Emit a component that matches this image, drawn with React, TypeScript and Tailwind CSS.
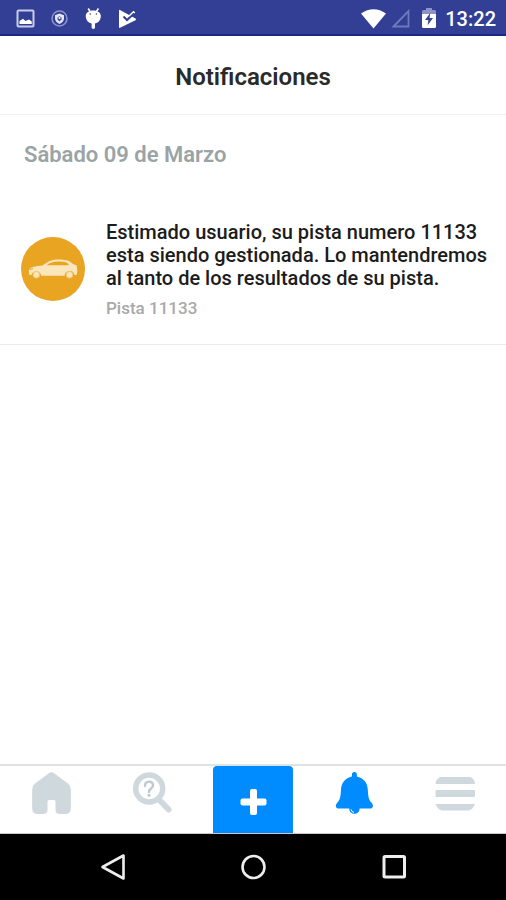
const HomeIcon = () => (
  <svg viewBox="0 0 40 44" className="h-11 w-10" fill="#cfd8dc" aria-hidden="true">
    <path d="M18.2 1Q20.5 -.6 22.8 1L37 11.6Q39.8 13.9 39.8 17.4V36.4Q39.8 42 34 42H29Q24.5 42 24.5 38V29.5Q24.5 28 23 28H18Q16.5 28 16.5 29.5V38Q16.5 42 12 42H7Q1.2 42 1.2 36.4V17.4Q1.2 13.9 4 11.6Z" />
  </svg>
);

const SearchIcon = () => (
  <svg viewBox="0 0 40 44" className="h-11 w-10" fill="none" aria-hidden="true">
    <circle cx="17.2" cy="16.5" r="13.5" stroke="#cfd8dc" strokeWidth="5.5" />
    <path d="M26.5 27L36.5 37.5" stroke="#cfd8dc" strokeWidth="6" strokeLinecap="round" />
    <path
      d="M13 13.7C13 8.3 21.1 8.3 21.1 13.3C21.1 16.7 17 16.3 17 19.9"
      stroke="#bccacf"
      strokeWidth="2.4"
      strokeLinecap="round"
    />
    <circle cx="17" cy="23.3" r="1.5" fill="#bccacf" />
  </svg>
);

const BellIcon = () => (
  <svg viewBox="0 0 40 44" className="h-11 w-10" fill="#008cff" aria-hidden="true">
    <path d="M17.9 2.6Q17.9 0 20.4 0T22.9 2.6V4.4C29.5 5.8 33.4 10.5 33.8 17.5C34.1 24.5 34.8 28 37.6 30.8C39.8 33.2 39.4 36.6 36 36.6H25.6C25.6 43.6 15.2 43.6 15.2 36.6H4.8C1.4 36.6 1 33.2 3.2 30.8C6 28 6.7 24.5 7 17.5C7.4 10.5 11.3 5.8 17.9 4.4Z" />
    <path d="M17 37.4Q17.4 40 20 40.4" fill="none" stroke="#fff" strokeWidth="1" />
  </svg>
);

const MenuIcon = () => (
  <svg viewBox="0 0 40 44" className="h-11 w-10" fill="#cfd8dc" aria-hidden="true">
    <path d="M5.5 5H35Q39.5 6.5 40 12H.5Q1 6.5 5.5 5Z" />
    <rect x=".5" y="18" width="39.5" height="7" rx="1" />
    <path d="M.5 32H40Q38 37.5 33.5 38.5H7Q2.5 37.5 .5 32Z" />
  </svg>
);

const CarIcon = () => (
  <svg viewBox="0 0 50 20" className="h-5 w-[50px]" aria-hidden="true">
    <path
      d="M1 15.5L.8 11C1.5 8.5 7 7 14.5 6.6C18.5 3.6 22 1.2 26 .8C32 .3 38 .9 41 2L45.5 5.2L48.6 6.2L49.4 12.5L48.4 16H46.5A5 5 0 0 0 36.6 16.8H13.2A5 5 0 0 0 3.4 16.2Z"
      fill="#fbe5bb"
    />
    <path d="M18.5 6.3C22 3.6 25.5 2.5 30 2.5C35 2.4 38.5 2.9 41 5.2L40 6.2Z" fill="#e9a422" />
    <path d="M1.5 10.5L5 9.6" stroke="#e9a422" strokeWidth="1" />
    <circle cx="8.3" cy="15.8" r="3.3" fill="#fbe5bb" stroke="#f2c67a" />
    <circle cx="41.5" cy="15.8" r="3.3" fill="#fbe5bb" stroke="#f2c67a" />
  </svg>
);

const StatusBar = () => (
  <div className="flex h-9 items-center justify-between border-b-2 border-[#1c2686] bg-[#323f94] pt-1 pr-[10px] pl-4 text-white">
    <div className="flex items-center gap-[14px]">
      <svg viewBox="0 0 20 20" className="size-5" aria-hidden="true">
        <rect x="1.5" y="1.5" width="16" height="16" rx="1" fill="none" stroke="#c9cde8" strokeWidth="2" />
        <path d="M3.5 15V12L7 9.8L9.5 12L13 10.5L15.8 12.5V15Z" fill="#fff" />
      </svg>
      <svg viewBox="0 0 20 20" className="size-5" aria-hidden="true">
        <circle cx="9.5" cy="9.5" r="7.5" fill="none" stroke="#8b95d0" strokeWidth="1.5" />
        <path d="M9.5 4.5L14 6.2V9.5C14 12 12 14 9.5 15C7 14 5 12 5 9.5V6.2Z" fill="#e4e8fa" />
        <path d="M9.5 7.2L11.5 8.5V10.5L9.5 12.5L7.5 10.5V8.5Z" fill="#465198" />
        <circle cx="9.5" cy="9" r="1" fill="#fff" />
      </svg>
      <svg viewBox="0 0 20 24" className="h-6 w-5" aria-hidden="true">
        <path d="M4.2 1.5L6.4 5M14.4 1.5L12.2 5" stroke="#fff" strokeWidth="1.6" />
        <path d="M1.8 10C1.2 5.6 5 3.4 9.3 3.4S17.4 5.6 16.8 10C16.4 13.5 14 16 11 16.6V20.6Q11 22 9.3 22T7.6 20.6V16.6C4.6 16 2.2 13.5 1.8 10Z" fill="#fff" />
        <circle cx="6.2" cy="7" r=".8" fill="#323f94" />
        <circle cx="12.4" cy="7" r=".8" fill="#323f94" />
      </svg>
      <svg viewBox="0 0 20 20" className="size-5" aria-hidden="true">
        <path d="M1 1.5Q1 .5 2 1L17.5 9.4Q18.8 10.3 17.5 11.2L2 18.8Q1 19.2 1 18Z" fill="#fff" />
        <path d="M5.5 7.5L9 11L17.5 3" fill="none" stroke="#323f94" strokeWidth="2" />
        <path d="M11 7L15.5 2.8L16.8 4" fill="none" stroke="#fff" strokeWidth="1.4" />
      </svg>
    </div>
    <div className="flex items-center">
      <svg viewBox="0 0 26 20" className="mr-1 h-5 w-[26px]" aria-hidden="true">
        <path d="M0 4.5C8 -1.2 17 -1.2 25 4.5L12.5 19.5Z" fill="#fff" />
      </svg>
      <svg viewBox="0 0 20 20" className="mr-[10px] size-5" aria-hidden="true">
        <path d="M2.5 17.5L17.5 2V17.5Z" fill="none" stroke="#6f79bd" strokeWidth="1.8" />
      </svg>
      <svg viewBox="0 0 16 22" className="mr-2 h-[22px] w-4" aria-hidden="true">
        <path d="M1 7V3.5Q1 2 2.5 2H5V0H11V2H13.5Q15 2 15 3.5V7Z" fill="#8b93c8" />
        <path d="M1 6H15V18.5Q15 20 13.5 20H2.5Q1 20 1 18.5Z" fill="#fff" />
        <path d="M9.2 5L4 12H7.4L6.6 17.2L12 10H8.6Z" fill="#323f94" />
      </svg>
      <span className="text-xl leading-6 font-medium">13:22</span>
    </div>
  </div>
);

const tabClass = "flex h-full w-full items-start justify-center pt-1.5";

const TabBar = () => (
  <nav className="grid h-[70px] grid-cols-5 border-t-2 border-b border-t-[#e0e2e3] border-b-[#c8c8c8] bg-white">
    <button type="button" aria-label="Inicio" className={tabClass}>
      <HomeIcon />
    </button>
    <button type="button" aria-label="Buscar" className={tabClass}>
      <SearchIcon />
    </button>
    <button
      type="button"
      aria-label="Agregar"
      className="mx-auto flex h-full w-4/5 items-center justify-center rounded-t-[4px] bg-[#008cff] pt-1"
    >
      <svg viewBox="0 0 28 28" className="size-7" fill="#fff" aria-hidden="true">
        <rect x="11" y="1" width="7" height="26" rx="2" />
        <rect x="1.5" y="10.5" width="26" height="7" rx="2" />
      </svg>
    </button>
    <button type="button" aria-label="Notificaciones" aria-current="page" className={tabClass}>
      <BellIcon />
    </button>
    <button type="button" aria-label="Menú" className={tabClass}>
      <MenuIcon />
    </button>
  </nav>
);

const SystemBar = () => (
  <div className="flex h-[66px] items-center justify-center gap-28 bg-black">
    <button type="button" aria-label="Atrás">
      <svg viewBox="0 0 28 28" className="size-7" fill="none" stroke="#eee" aria-hidden="true">
        <path d="M24.5 2.5V25.5L3.5 14Z" strokeWidth="2.6" strokeLinejoin="round" />
      </svg>
    </button>
    <button type="button" aria-label="Pantalla principal">
      <svg viewBox="0 0 28 28" className="size-7" fill="none" stroke="#eee" aria-hidden="true">
        <circle cx="14.5" cy="14" r="11" strokeWidth="2.6" />
      </svg>
    </button>
    <button type="button" aria-label="Recientes">
      <svg viewBox="0 0 28 28" className="size-7" fill="none" stroke="#eee" aria-hidden="true">
        <rect x="5" y="3.5" width="20.5" height="20.5" rx="1" strokeWidth="3" />
      </svg>
    </button>
  </div>
);

const notifications = [
  {
    id: 11133,
    message:
      "Estimado usuario, su pista numero 11133 esta siendo gestionada. Lo mantendremos al tanto de los resultados de su pista.",
    label: "Pista 11133",
  },
];

const App = () => {
  return (
    <div className="flex min-h-screen flex-col bg-white font-[Roboto,sans-serif]">
      <StatusBar />

      <header className="flex h-[79px] items-center justify-center border-b border-[#efefef] pt-1">
        <h1 className="text-2xl leading-7 font-semibold text-[#2a2a2a]">Notificaciones</h1>
      </header>

      <main className="flex-1">
        <h2 className="px-6 pt-[26px] text-[22px] leading-7 font-semibold text-[#9aa3a5]">
          Sábado 09 de Marzo
        </h2>
        <ul className="pt-9">
          {notifications.map((item) => (
            <li
              key={item.id}
              className="flex items-start gap-[21px] border-b border-[#ececec] pt-4 pr-4 pb-[26px] pl-[21px]"
            >
              <div className="mt-4 flex size-16 shrink-0 items-center justify-center rounded-full bg-[#e9a422]">
                <CarIcon />
              </div>
              <div>
                <p className="text-xl leading-[23px] font-medium text-[#1c1c1c]">{item.message}</p>
                <p className="mt-2 text-[17px] leading-5 font-medium text-[#a9a9a9]">{item.label}</p>
              </div>
            </li>
          ))}
        </ul>
      </main>

      <TabBar />
      <SystemBar />
    </div>
  );
};

export default App;
